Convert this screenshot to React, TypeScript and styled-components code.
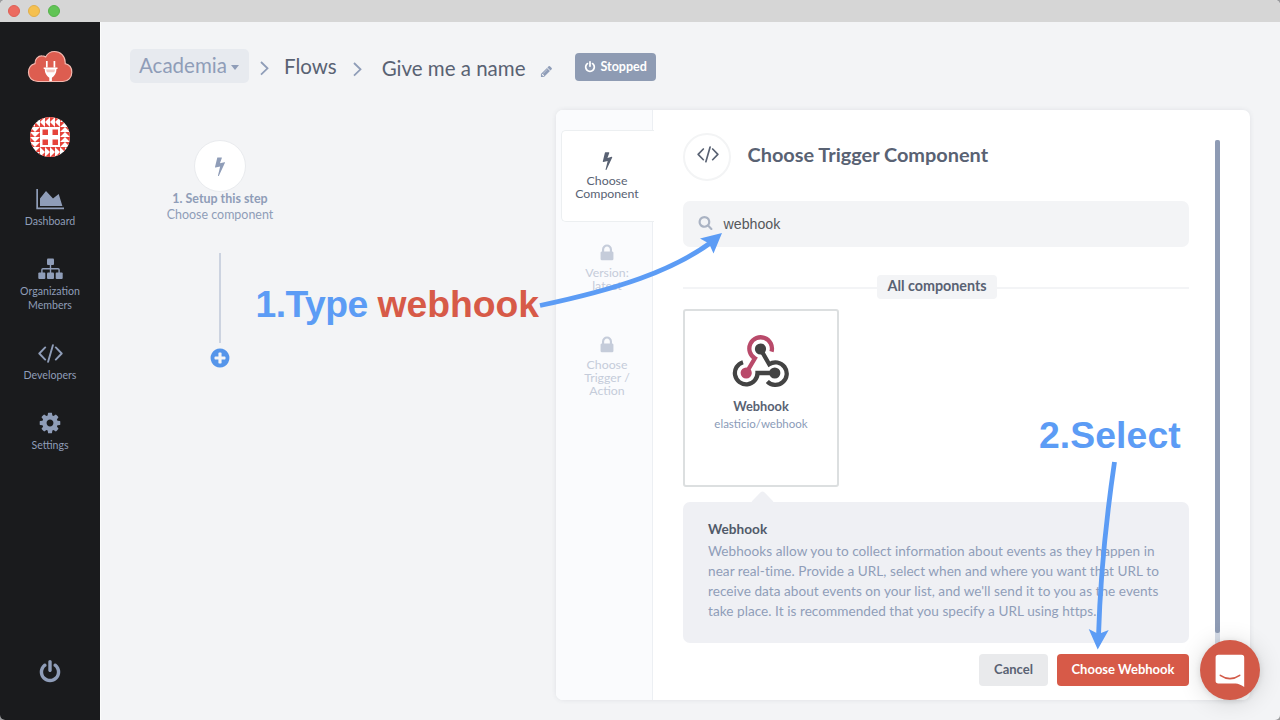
import React from "react";
import styled, { createGlobalStyle } from "styled-components";

const sans = `Lato, "Noto Sans", sans-serif`;
const helvetica = `"Liberation Sans", Arial, sans-serif`;

const c = {
  slate: "#8f9db8",
  ink: "#596273",
  page: "#f3f4f6",
  red: "#d75a48",
  blue: "#5c9cf5",
};

const GlobalStyle = createGlobalStyle`
  *, *::before, *::after { box-sizing: border-box; }
  body { margin: 0; font-family: ${sans}; background: #9a9b9d; }
  svg { display: block; flex: none; }
`;

/* ---------- window ---------- */

const Window = styled.div`
  position: relative;
  width: 1280px;
  height: 720px;
  display: flex;
  flex-direction: column;
  overflow: hidden;
  border-radius: 5px;
  background: ${c.page};
`;

const TitleBar = styled.div`
  height: 22px;
  flex: none;
  display: flex;
  align-items: center;
  gap: 8px;
  padding-left: 8px;
  background: #d6d6d6;
`;

const Light = styled.span<{ $fill: string; $ring: string }>`
  width: 12px;
  height: 12px;
  border-radius: 50%;
  background: ${(p) => p.$fill};
  border: 1px solid ${(p) => p.$ring};
`;

const Body = styled.div`
  flex: 1;
  min-height: 0;
  display: flex;
`;

/* ---------- sidebar ---------- */

const Sidebar = styled.aside`
  width: 100px;
  flex: none;
  display: flex;
  flex-direction: column;
  align-items: center;
  padding: 28px 0 36px;
  background: #1a1b1d;
  color: ${c.slate};
`;

const Nav = styled.nav`
  display: flex;
  flex-direction: column;
  gap: 30px;
  margin: 31px 0 auto;
`;

const NavItem = styled.a`
  display: flex;
  flex-direction: column;
  align-items: center;
  width: 100px;
  gap: 4px;
  font-size: 10.6px;
  line-height: 14px;
  text-align: center;
`;

const NavIcon = styled.span`
  height: 22px;
  display: flex;
  align-items: center;
`;

const NavLabel = styled.span`
  width: 70px;
`;

const Avatar = styled.div`
  margin-top: 34px;
  width: 40px;
  height: 40px;
  border-radius: 50%;
  overflow: hidden;
`;

/* ---------- header ---------- */

const Main = styled.main`
  flex: 1;
  min-width: 0;
  display: flex;
  flex-direction: column;
  border-left: 1px solid #fbfcfc;
`;

const Header = styled.header`
  height: 88px;
  flex: none;
  display: flex;
  align-items: flex-start;
  padding: 27px 0 0 29px;
  font-size: 20.5px;
  line-height: 30px;
  white-space: nowrap;
`;

const Workspace = styled.button`
  display: flex;
  align-items: center;
  gap: 4px;
  width: 119px;
  height: 34px;
  padding: 0 0 3px 9px;
  border: 0;
  border-radius: 5px;
  background: #e7eaef;
  color: ${c.slate};
  font: inherit;
`;

const Caret = styled.i`
  margin-top: 6px;
  border: 4.5px solid transparent;
  border-top: 5px solid ${c.slate};
  border-bottom: 0;
`;

const Separator = styled.span<{ $left: number; $top: number }>`
  margin: ${(p) => p.$top}px 0 0 ${(p) => p.$left}px;
  color: ${c.slate};
`;

const Crumb = styled.span<{ $left: number; $top: number }>`
  margin: ${(p) => p.$top}px 0 0 ${(p) => p.$left}px;
  color: ${c.ink};
`;

const EditIcon = styled.span`
  margin: 16px 0 0 14px;
  color: ${c.slate};
`;

const Status = styled.span`
  display: flex;
  align-items: center;
  gap: 5px;
  width: 81px;
  height: 28px;
  margin: 4px 0 0 22px;
  padding-left: 9px;
  border-radius: 4px;
  background: #8e9bb3;
  color: #fff;
  font-size: 12.5px;
  font-weight: 700;
`;

/* ---------- flow canvas ---------- */

const Workbench = styled.div`
  flex: 1;
  min-height: 0;
  display: flex;
  align-items: flex-start;
`;

const Flow = styled.section`
  width: 160px;
  margin: 30px 256px 0 39px;
  display: flex;
  flex-direction: column;
  align-items: center;
`;

const StepCircle = styled.div`
  width: 52px;
  height: 52px;
  border-radius: 50%;
  border: 1px solid #e9ebee;
  background: #fff;
  color: ${c.slate};
  display: flex;
  align-items: center;
  justify-content: center;
`;

const StepText = styled.div`
  margin-top: -1px;
  text-align: center;
  font-size: 12.45px;
  line-height: 16px;
  color: ${c.slate};
`;

const Connector = styled.div`
  width: 2px;
  height: 90px;
  margin: 30px 0 4px;
  background: #ccd3e0;
`;

/* ---------- panel ---------- */

const Panel = styled.section`
  width: 694px;
  height: 590px;
  display: flex;
  border-radius: 7px;
  background: #fff;
  box-shadow: 0 0 5px rgba(60, 70, 90, 0.1);
  overflow: hidden;
`;

const Tabs = styled.div`
  width: 97px;
  flex: none;
  display: flex;
  flex-direction: column;
  padding: 20px 0 0 5px;
  background: #fafbfd;
  border-right: 1px solid #eceff3;
`;

const Tab = styled.div<{ $active?: boolean }>`
  height: 92px;
  width: ${(p) => (p.$active ? 93 : 92)}px;
  display: flex;
  flex-direction: column;
  align-items: center;
  padding: 20px ${(p) => (p.$active ? 2 : 1)}px 0 0;
  border: 1px solid ${(p) => (p.$active ? "#eceff1" : "transparent")};
  border-right: 0;
  border-radius: ${(p) => (p.$active ? "5px 0 0 5px" : 0)};
  background: ${(p) => (p.$active ? "#fff" : "transparent")};
  color: ${(p) => (p.$active ? c.ink : "#c5ccda")};
  font-size: 12.3px;
  line-height: 13px;
  text-align: center;

  & + &:not(:last-child) {
    border-bottom-color: #f0f2f5;
  }
`;

const TabIcon = styled.span`
  height: 23px;
  display: flex;
  align-items: flex-start;
`;

const TabLabel = styled.span`
  width: 66px;
`;

const Content = styled.div`
  width: 506px;
  margin-left: 30px;
  display: flex;
  flex-direction: column;
  padding-top: 23px;
`;

const TitleRow = styled.div`
  display: flex;
  align-items: center;
  gap: 16.5px;
`;

const TitleCircle = styled.span`
  width: 48px;
  height: 48px;
  border: 2px solid #f3f4f5;
  border-radius: 50%;
  display: flex;
  align-items: center;
  justify-content: center;
  padding: 0 0 5px 1px;
  color: ${c.ink};
`;

const Title = styled.h1`
  margin: 0 0 6px;
  font-size: 19.9px;
  line-height: 24px;
  font-weight: 700;
  color: ${c.ink};
`;

const Search = styled.div`
  height: 46px;
  margin-top: 20px;
  display: flex;
  align-items: center;
  gap: 10.5px;
  padding-left: 15px;
  border-radius: 7px;
  background: #f3f4f6;
  color: #aab3c3;
`;

const SearchIcon = styled.span`
  margin-top: -4px;
`;

const Query = styled.span`
  font: 14.2px/18px ${helvetica};
  color: #56585c;
`;

const Divider = styled.div`
  display: flex;
  align-items: center;
  height: 24px;
  margin-top: 28px;

  &::before, &::after {
    content: "";
    flex: 1;
    height: 2px;
    margin-top: 2px;
    background: #f3f4f6;
  }

  &::before {
    flex: 0 0 194px;
  }
`;

const DividerLabel = styled.span`
  width: 120px;
  height: 24px;
  border-radius: 4px;
  background: #f3f4f6;
  color: ${c.ink};
  font-size: 14.3px;
  line-height: 22px;
  font-weight: 700;
  text-align: center;
`;

const Card = styled.div`
  width: 156px;
  height: 178px;
  margin-top: 10px;
  padding-top: 23px;
  border: 2px solid #dcdfe0;
  border-radius: 3px;
  display: flex;
  flex-direction: column;
  align-items: center;
  color: ${c.ink};
`;

const CardName = styled.b`
  margin-top: 9px;
  font-size: 12.8px;
  line-height: 18px;
`;

const CardRepo = styled.span`
  font-size: 11.5px;
  line-height: 17px;
  color: #8b9bb8;
`;

const Callout = styled.div`
  position: relative;
  height: 141px;
  margin-top: 15px;
  padding: 17px 24px 0 25px;
  border-radius: 7px;
  background: #eff0f4;
  color: #909eb9;
  font-size: 13.6px;
  line-height: 20px;
  letter-spacing: 0.04px;
  white-space: nowrap;

  &::before {
    content: "";
    position: absolute;
    left: 71px;
    top: -8px;
    width: 17px;
    height: 17px;
    border-radius: 3px;
    background: #eff0f4;
    transform: rotate(45deg);
  }
`;

const CalloutTitle = styled.div`
  position: relative;
  margin-bottom: 2px;
  font-weight: 700;
  color: #515a69;
`;

const Actions = styled.div`
  display: flex;
  justify-content: flex-end;
  gap: 9px;
  margin-top: 11px;
`;

const Button = styled.button<{ $primary?: boolean }>`
  width: ${(p) => (p.$primary ? 132 : 69)}px;
  height: 32px;
  padding: 0 0 2px;
  border: 0;
  border-radius: 4px;
  background: ${(p) => (p.$primary ? c.red : "#e9eaec")};
  color: ${(p) => (p.$primary ? "#fff" : c.ink)};
  font: 700 13px/30px ${sans};
`;

const Track = styled.div`
  width: 5px;
  height: 520px;
  margin: 30px 0 0 26px;
  background: #d5dce7;
  border-radius: 2px;
`;

const Thumb = styled.div`
  height: 493px;
  border-radius: 2px;
  background: #8e9bb4;
`;

/* ---------- floating layers ---------- */

const Chat = styled.div`
  position: absolute;
  right: 20px;
  bottom: 20px;
  width: 60px;
  height: 60px;
  border-radius: 50%;
  background: #d25a48;
  box-shadow: 0 1px 6px rgba(0, 0, 0, 0.1), 0 2px 24px rgba(0, 0, 0, 0.14);
`;

const Note = styled.div<{ $x: number; $y: number; $tracking: number }>`
  position: absolute;
  left: ${(p) => p.$x}px;
  top: ${(p) => p.$y}px;
  font: 700 37.3px/44px ${helvetica};
  letter-spacing: ${(p) => p.$tracking}px;
  color: ${c.blue};
  white-space: nowrap;
`;

const NoteAccent = styled.span`
  letter-spacing: 0;
  color: ${c.red};
`;

const Arrows = styled.svg`
  position: absolute;
  inset: 0;
`;

/* ---------- icons ---------- */

const paths = {
  power:
    "M1664 896q0 156-61 298t-164 245-245 164-298 61-298-61-245-164-164-245-61-298q0-182 80.5-343t226.5-270q43-32 95.5-25t83.5 50q32 42 24.5 94.5t-49.5 84.5q-98 74-151.5 181t-53.5 228q0 104 40.5 198.5t109.5 163.5 163.5 109.5 198.5 40.5 198.5-40.5 163.5-109.5 109.5-163.5 40.5-198.5q0-121-53.5-228t-151.5-181q-42-32-49.5-84.5t24.5-94.5q31-43 84-50t95 25q146 109 226.5 270t80.5 343zm-640-768v640q0 52-38 90t-90 38-90-38-38-90v-640q0-52 38-90t90-38 90 38 38 90z",
  bolt:
    "M1333 566q18 20 7 44l-540 1157q-13 25-42 25-4 0-14-2-17-5-25.5-19t-4.5-30l197-808-406 101q-4 1-12 1-18 0-31-11-18-15-13-39l201-825q4-14 16-23t28-9h328q19 0 32 12.5t13 29.5q0 8-5 18l-171 463 396-98q8-2 12-2 19 0 34 15z",
  search:
    "M1216 832q0-185-131.5-316.5t-316.5-131.5-316.5 131.5-131.5 316.5 131.5 316.5 316.5 131.5 316.5-131.5 131.5-316.5zm512 832q0 52-38 90t-90 38q-54 0-90-38l-343-342q-179 124-399 124-143 0-273.5-55.5t-225-150-150-225-55.5-273.5 55.5-273.5 150-225 225-150 273.5-55.5 273.5 55.5 225 150 150 225 55.5 273.5q0 220-124 399l343 343q37 37 37 90z",
  lock:
    "M640 768h512v-192q0-106-75-181t-181-75-181 75-75 181v192zm832 96v576q0 40-28 68t-68 28h-960q-40 0-68-28t-28-68v-576q0-40 28-68t68-28h32v-192q0-184 132-316t316-132 316 132 132 316v192h32q40 0 68 28t28 68z",
  cog:
    "M1152 896q0-106-75-181t-181-75-181 75-75 181 75 181 181 75 181-75 75-181zm512-109v222q0 12-8 23t-20 13l-185 28q-19 54-39 91 35 50 107 138 10 12 10 25t-9 23q-27 37-99 108t-94 71q-12 0-26-9l-138-108q-44 23-91 38-16 136-29 186-7 28-36 28h-222q-14 0-24.5-8.5t-11.5-21.5l-28-184q-49-16-90-37l-141 107q-10 9-25 9-14 0-25-11-126-114-165-168-7-10-7-23 0-12 8-23 15-21 51-66.5t54-70.5q-27-50-41-99l-183-27q-13-2-21-12.5t-8-23.5v-222q0-12 8-23t19-13l186-28q14-46 39-92-40-57-107-138-10-12-10-24 0-10 9-23 26-36 98.5-107.5t94.5-71.5q13 0 26 10l138 107q44-23 91-38 16-136 29-186 7-28 36-28h222q14 0 24.5 8.5t11.5 21.5l28 184q49 16 90 37l142-107q9-9 24-9 13 0 25 10 129 119 165 170 7 8 7 22 0 12-8 23-15 21-51 66.5t-54 70.5q26 50 41 98l183 28q13 2 21 12.5t8 23.5z",
  pencil:
    "M491 1536l91-91-235-235-91 91v107h128v128h107zm523-928q0-22-22-22-10 0-17 7l-542 542q-7 7-7 17 0 22 22 22 10 0 17-7l542-542q7-7 7-17zm-54-192l416 416-832 832h-416v-416zm683 96q0 53-37 90l-166 166-416-416 166-165q36-38 90-38 53 0 91 38l235 234q37 39 37 91z",
  plus:
    "M1344 960v-128q0-26-19-45t-45-19h-256v-256q0-26-19-45t-45-19h-128q-26 0-45 19t-19 45v256h-256q-26 0-45 19t-19 45v128q0 26 19 45t45 19h256v256q0 26 19 45t45 19h128q26 0 45-19t19-45v-256h256q26 0 45-19t19-45zm320-64q0 209-103 385.5t-279.5 279.5-385.5 103-385.5-103-279.5-279.5-103-385.5 103-385.5 279.5-279.5 385.5-103 385.5 103 279.5 279.5 103 385.5z",
};

const Icon = ({ name, size, fill = "currentColor" }: { name: keyof typeof paths; size: number; fill?: string }) => (
  <svg width={size} height={size} viewBox="0 0 1792 1792" fill={fill}>
    <path d={paths[name]} />
  </svg>
);

const CodeIcon = ({ width, stroke }: { width: number; stroke: number }) => (
  <svg width={width} height={width * 0.76} viewBox="0 0 25 19" fill="none" stroke="currentColor" strokeWidth={stroke} strokeLinecap="round" strokeLinejoin="round">
    <path d="M7.200 3.400 1.300 9.500l5.900 6.100M17.800 3.400l5.900 6.100-5.900 6.100M14.900 1.200 10.100 17.800" />
  </svg>
);

const ChartIcon = () => (
  <svg width="28" height="22" viewBox="0 0 28 22" fill="currentColor">
    <path d="M.3 1h1.700v18.600h26v1.700H.3zM4 18V10.500L10 3l7 7.600L22.700 6 26.400 18z" />
  </svg>
);

const SitemapIcon = () => (
  <svg width="25" height="22" viewBox="0 0 25 22" fill="currentColor">
    <rect x="9" y=".5" width="7" height="6.600" rx="1" />
    <rect x=".3" y="14.400" width="7" height="6.600" rx="1" />
    <rect x="9" y="14.400" width="7" height="6.600" rx="1" />
    <rect x="17.700" y="14.400" width="7" height="6.600" rx="1" />
    <path d="M12.500 6v9M3.900 15v-3.200q0-1 1-1h15.200q1 0 1 1V15" fill="none" stroke="currentColor" strokeWidth="1.400" />
  </svg>
);

const CloudLogo = () => (
  <svg width="46" height="33" viewBox="0 0 46 33">
    <path
      d="M11 31.500C5 31.500 1.500 27.600 1.500 22.500 1.500 17.800 4.200 14.600 8 13.600 7.600 9.200 11 5.800 15 5.900c1.500 0 2.700.4 3.700 1C20.500 3.400 23.800 1.500 27.500 1.500c6 0 10.700 4.600 10.700 10.900v1.300c4 .9 6.600 4.300 6.600 8.500 0 5.300-3.700 9.300-9 9.300z"
      fill="#dd5d50"
      stroke="#f3b9b0"
      strokeWidth="1.200"
    />
    <path d="M19.800 11v6.500M27.400 11v6.500" stroke="#fff" strokeWidth="1.700" />
    <path d="M16.700 17.400h13.800v1.700h-1c0 4.400-2 7-4.600 8.600V31h-2.600v-3.300c-2.600-1.600-4.600-4.200-4.600-8.600h-1z" fill="#fff" />
    <path d="M19.200 19.600h8.800q-.1 1.500-.8 2.700h-7.200q-.7-1.200-.8-2.700z" fill="#f5c6bf" />
  </svg>
);

const Identicon = () => {
  const arrows = "M0 0H5L0 5ZM0 5L5 10H0ZM5 0H10L5 5ZM5 5L10 10H5Z";
  const edge = [0, 10, 20, 30];
  return (
    <svg width="40" height="40" viewBox="0 0 40 40">
      <rect width="40" height="40" fill="#fff" />
      <g fill="#e5443b">
        {edge.flatMap((x, i) =>
          edge.map((y, j) => {
            if (i % 3 && j % 3) return null;
            const turn = j === 0 && i < 3 ? 0 : i === 3 && j < 3 ? 90 : j === 3 && i > 0 ? 180 : 270;
            return <path key={`${i}${j}`} d={arrows} transform={`translate(${x} ${y}) rotate(${turn} 5 5)`} />;
          })
        )}
        <path d="M12.500 12.500h5.500v5.500h-5.500zM22.500 12.500h5.500v5.500h-5.500zM12.500 22.500h5.500v5.500h-5.500zM22.500 22.500h5.500v5.500h-5.500z" />
      </g>
    </svg>
  );
};

const WebhookLogo = () => (
  <svg width="58" height="54" viewBox="52.500 34 58 54" fill="none" strokeWidth="4.300">
    <path d="M63.500 62.200A11.300 11.300 0 1 0 78 73H95.300" stroke="#434343" />
    <path d="M81 49 89.700 64.200A11.300 11.300 0 1 1 87.800 81.500" stroke="#434343" />
    <path d="M92 51.700A11.300 11.300 0 1 0 75.400 58.300L66.700 73" stroke="#b94a6a" />
    <circle cx="81" cy="49" r="5.600" fill="#434343" />
    <circle cx="95.300" cy="73" r="5.600" fill="#434343" />
    <circle cx="66.700" cy="73" r="5.600" fill="#b94a6a" />
  </svg>
);

const Chevron = () => (
  <svg width="9" height="16" viewBox="0 0 9 16" fill="none" stroke="currentColor" strokeWidth="1.800">
    <path d="M1 2 7.500 8.300 1 14.600" />
  </svg>
);

const ChatIcon = () => (
  <svg width="60" height="60" viewBox="0 0 60 60">
    <path d="M18.300 14.700h23.200q2.700 0 2.700 2.700V47q-5-3.300-8.500-3.500H18.300q-2.700 0-2.700-2.700V17.400q0-2.700 2.700-2.700z" fill="#fff" />
    <path d="M20.300 35.300q9.700 6.600 19.400 0" fill="none" stroke="#d25a48" strokeWidth="1.600" strokeLinecap="round" />
  </svg>
);

/* ---------- page ---------- */

export default function App() {
  return (
    <>
      <GlobalStyle />
      <Window>
        <TitleBar>
          <Light $fill="#ec6b60" $ring="#dd5f55" />
          <Light $fill="#f5c04f" $ring="#e0ae4a" />
          <Light $fill="#61c455" $ring="#55b14a" />
        </TitleBar>
        <Body>
          <Sidebar>
            <CloudLogo />
            <Avatar>
              <Identicon />
            </Avatar>
            <Nav>
              <NavItem>
                <NavIcon><ChartIcon /></NavIcon>
                <NavLabel>Dashboard</NavLabel>
              </NavItem>
              <NavItem>
                <NavIcon><SitemapIcon /></NavIcon>
                <NavLabel>Organization Members</NavLabel>
              </NavItem>
              <NavItem>
                <NavIcon><CodeIcon width={25} stroke={1.9} /></NavIcon>
                <NavLabel>Developers</NavLabel>
              </NavItem>
              <NavItem>
                <NavIcon><Icon name="cog" size={24} /></NavIcon>
                <NavLabel>Settings</NavLabel>
              </NavItem>
            </Nav>
            <Icon name="power" size={24} />
          </Sidebar>
          <Main>
            <Header>
              <Workspace>Academia<Caret /></Workspace>
              <Separator $left={11} $top={11}><Chevron /></Separator>
              <Crumb $left={15} $top={2}>Flows</Crumb>
              <Separator $left={16} $top={12}><Chevron /></Separator>
              <Crumb $left={20} $top={4}>Give me a name</Crumb>
              <EditIcon><Icon name="pencil" size={13} /></EditIcon>
              <Status><Icon name="power" size={12} />Stopped</Status>
            </Header>
            <Workbench>
              <Flow>
                <StepCircle><Icon name="bolt" size={20} /></StepCircle>
                <StepText>
                  <b>1. Setup this step</b>
                  <div>Choose component</div>
                </StepText>
                <Connector />
                <Icon name="plus" size={22} fill="#5595ea" />
              </Flow>
              <Panel>
                <Tabs>
                  <Tab $active>
                    <TabIcon><Icon name="bolt" size={19} /></TabIcon>
                    <TabLabel>Choose Component</TabLabel>
                  </Tab>
                  <Tab>
                    <TabIcon><Icon name="lock" size={20} /></TabIcon>
                    <TabLabel>Version:<br />latest</TabLabel>
                  </Tab>
                  <Tab>
                    <TabIcon><Icon name="lock" size={20} /></TabIcon>
                    <TabLabel>Choose<br />Trigger /<br />Action</TabLabel>
                  </Tab>
                </Tabs>
                <Content>
                  <TitleRow>
                    <TitleCircle><CodeIcon width={22} stroke={1.9} /></TitleCircle>
                    <Title>Choose Trigger Component</Title>
                  </TitleRow>
                  <Search>
                    <SearchIcon><Icon name="search" size={15} /></SearchIcon>
                    <Query>webhook</Query>
                  </Search>
                  <Divider><DividerLabel>All components</DividerLabel></Divider>
                  <Card>
                    <WebhookLogo />
                    <CardName>Webhook</CardName>
                    <CardRepo>elasticio/webhook</CardRepo>
                  </Card>
                  <Callout>
                    <CalloutTitle>Webhook</CalloutTitle>
                    Webhooks allow you to collect information about events as they happen in<br />
                    near real-time. Provide a URL, select when and where you want that URL to<br />
                    receive data about events on your list, and we'll send it to you as the events<br />
                    take place. It is recommended that you specify a URL using https.
                  </Callout>
                  <Actions>
                    <Button>Cancel</Button>
                    <Button $primary>Choose Webhook</Button>
                  </Actions>
                </Content>
                <Track><Thumb /></Track>
              </Panel>
            </Workbench>
          </Main>
        </Body>
        <Chat><ChatIcon /></Chat>
        <Note $x={255.5} $y={282} $tracking={-0.55}>1.Type <NoteAccent>webhook</NoteAccent></Note>
        <Note $x={1039} $y={413} $tracking={0.1}>2.Select</Note>
        <Arrows width="1280" height="720" viewBox="0 0 1280 720" fill="none" stroke={c.blue} strokeWidth="4.800">
          <path d="M540 305.500C618 289 672 271 711 242.500" />
          <path d="M722 233 700 238.500 709 243.500 713.500 253.500z" fill={c.blue} stroke="none" />
          <path d="M1114.500 462C1106 520 1100 585 1098.500 636" />
          <path d="M1097.700 649.500 1088.700 629 1098.500 634 1108.700 630z" fill={c.blue} stroke="none" />
        </Arrows>
      </Window>
    </>
  );
}
